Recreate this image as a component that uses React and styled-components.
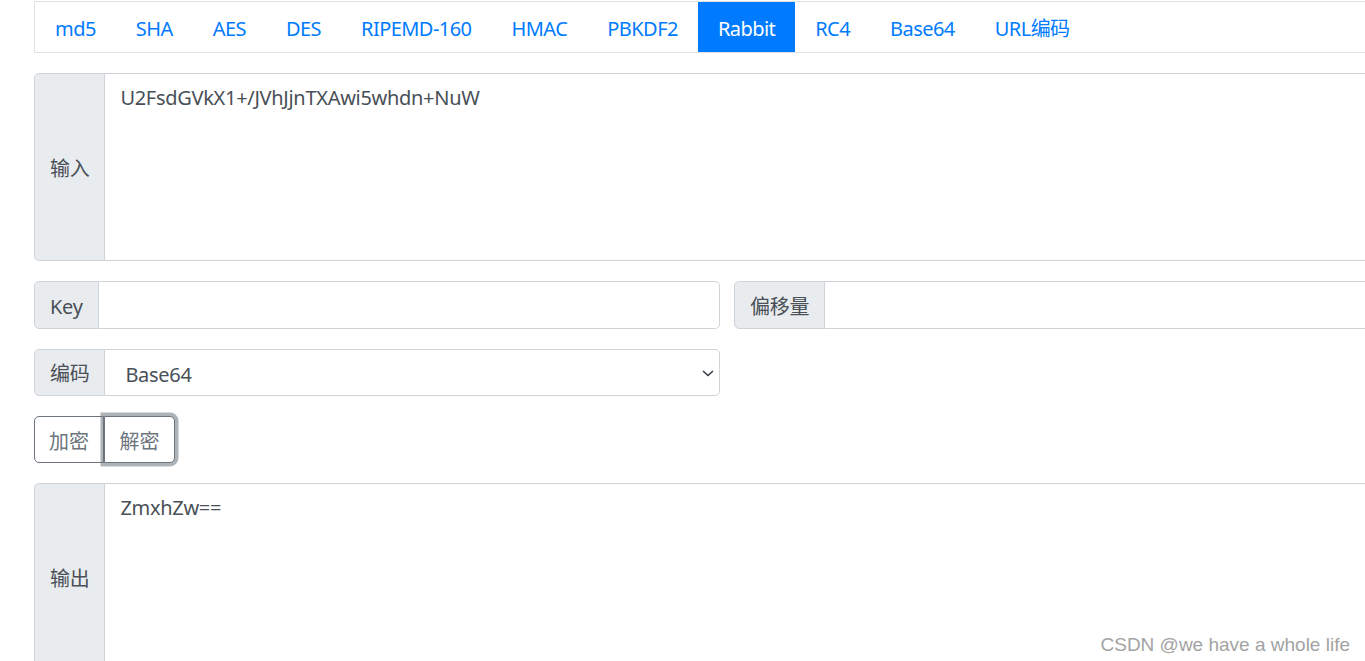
import React from 'react'
import styled, { createGlobalStyle } from 'styled-components'

const GlobalStyle = createGlobalStyle`
  html, body {
    margin: 0;
    padding: 0;
    background: #fff;
    overflow: hidden;
  }
  body {
    font-family: "Noto Sans", "Noto Sans CJK SC", sans-serif;
    font-size: 20px;
    color: #495057;
  }
  * {
    box-sizing: border-box;
  }
`

const tabs = ['md5', 'SHA', 'AES', 'DES', 'RIPEMD-160', 'HMAC', 'PBKDF2', 'Rabbit', 'RC4', 'Base64', 'URL编码']

const Page = styled.div`
  position: relative;
  width: 1365px;
  height: 661px;
  padding: 1px 0 0 34px;
  overflow: hidden;
`

const Container = styled.div`
  width: 1386px;
`

const Nav = styled.ul`
  display: flex;
  list-style: none;
  margin: 0 0 20px;
  padding: 0;
  border: 1px solid #dee2e6;
`

const NavLink = styled.li`
  padding: 12px 20px 8px;
  line-height: 30px;
  height: 50px;
  letter-spacing: -0.55px;
  color: ${(p) => (p.$active ? '#fff' : '#007bff')};
  background: ${(p) => (p.$active ? '#007bff' : 'transparent')};
  white-space: nowrap;
  cursor: pointer;
`

const Group = styled.div`
  display: flex;
  height: ${(p) => p.$h}px;
  margin-bottom: 20px;
`

const Addon = styled.span`
  display: flex;
  align-items: center;
  padding: 3px 15px 0;
  background: #e9ecef;
  border: 1px solid #ced4da;
  border-radius: 5px 0 0 5px;
  color: #495057;
  line-height: 30px;
  letter-spacing: -0.3px;
  white-space: nowrap;
`

const Area = styled.textarea`
  flex: 1;
  border: 1px solid #ced4da;
  border-left: none;
  border-radius: 0 5px 5px 0;
  padding: 9px 15px 7px;
  font: inherit;
  line-height: 30px;
  letter-spacing: -0.3px;
  color: #495057;
  resize: none;
  outline: none;
`

const Field = styled.input`
  flex: 1;
  min-width: 0;
  border: 1px solid #ced4da;
  border-left: none;
  border-radius: 0 5px 5px 0;
  padding: 7px 15px;
  font: inherit;
  color: #495057;
  outline: none;
`

const Row = styled.div`
  display: grid;
  grid-template-columns: 686px 686px;
  gap: 14px;
`

const SelectWrap = styled.div`
  position: relative;
  flex: 1;
  display: flex;
`

const Select = styled.select`
  flex: 1;
  appearance: none;
  border: 1px solid #ced4da;
  border-left: none;
  border-radius: 0 5px 5px 0;
  padding: 4px 40px 0 20px;
  font: inherit;
  letter-spacing: -0.3px;
  color: #495057;
  background: #fff;
  outline: none;
`

const Chevron = styled.svg`
  position: absolute;
  right: 6px;
  top: 19px;
  pointer-events: none;
`

const BtnGroup = styled.div`
  display: flex;
  margin-bottom: 20px;
`

const Btn = styled.button`
  height: 47px;
  width: ${(p) => (p.$first ? '70px' : '71px')};
  padding: 4px 0 0;
  font: inherit;
  line-height: 30px;
  color: #6c757d;
  background: #fff;
  border: 1px solid #6c757d;
  border-radius: ${(p) => (p.$first ? '5px 0 0 5px' : '0 5px 5px 0')};
  margin-left: ${(p) => (p.$first ? '0' : '0')};
  position: relative;
  box-shadow: ${(p) => (p.$focus ? '0 0 0 3.5px rgba(108, 117, 125, 0.55)' : 'none')};
  z-index: ${(p) => (p.$focus ? 1 : 0)};
`

const Watermark = styled.div`
  position: absolute;
  right: 15px;
  bottom: 5px;
  font-family: "Liberation Sans", Arial, sans-serif;
  font-size: 19px;
  color: #a3a3a3;
`

export default function App() {
  return (
    <>
      <GlobalStyle />
      <Page>
        <Container>
          <Nav>
            {tabs.map((t) => (
              <NavLink key={t} $active={t === 'Rabbit'}>
                {t}
              </NavLink>
            ))}
          </Nav>

          <Group $h={188}>
            <Addon>输入</Addon>
            <Area defaultValue="U2FsdGVkX1+/JVhJjnTXAwi5whdn+NuW" />
          </Group>

          <Row>
            <Group $h={48}>
              <Addon>Key</Addon>
              <Field />
            </Group>
            <Group $h={48}>
              <Addon>偏移量</Addon>
              <Field />
            </Group>
          </Row>

          <Row>
            <Group $h={47}>
              <Addon>编码</Addon>
              <SelectWrap>
                <Select defaultValue="Base64">
                  <option>Base64</option>
                  <option>Hex</option>
                </Select>
                <Chevron width="12" height="10" viewBox="0 0 12 10">
                  <path d="M1 3l5 4.5L11 3" fill="none" stroke="#343a40" strokeWidth="1.5" />
                </Chevron>
              </SelectWrap>
            </Group>
          </Row>

          <BtnGroup>
            <Btn $first>加密</Btn>
            <Btn $focus>解密</Btn>
          </BtnGroup>

          <Group $h={188}>
            <Addon>输出</Addon>
            <Area defaultValue="ZmxhZw==" />
          </Group>
        </Container>
        <Watermark>CSDN @we have a whole life</Watermark>
      </Page>
    </>
  )
}
